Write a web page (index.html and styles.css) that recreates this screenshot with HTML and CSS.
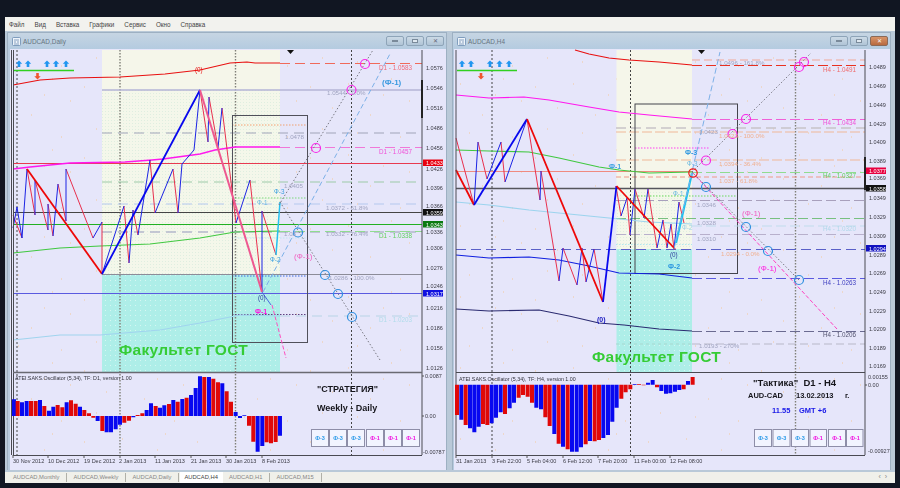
FILE: index.html
```html
<!DOCTYPE html>
<html lang="ru">
<head>
<meta charset="utf-8">
<title>AUDCAD</title>
<link rel="stylesheet" href="styles.css">
</head>
<body>
<div class="app">
  <nav class="menu">
    <span>Файл</span><span>Вид</span><span>Вставка</span><span>Графики</span><span>Сервис</span><span>Окно</span><span>Справка</span>
  </nav>
  <main class="mdi">
    <section class="win win-left">
      <header class="title">
        <svg class="doc" viewBox="0 0 9 9"><rect x=".5" y=".5" width="8" height="8" rx="1" class="doc-box"/><path d="M2 3h5M2 5h2M5 5h2M2 7h5" class="doc-line"/></svg>
        <span class="title-text">AUDCAD,Daily</span>
        <span class="wbtn"><i class="ico-min"></i></span><span class="wbtn"><i class="ico-max"></i></span><span class="wbtn"><i class="ico-x">✕</i></span>
      </header>
      <svg class="chart" viewBox="10 49 436 421">
        <defs>
          <pattern id="stip" width="3" height="3" patternUnits="userSpaceOnUse"><rect width="3" height="3" fill="#f4f7ea"/><rect width="1" height="1" fill="#dfeee0"/></pattern>
          <pattern id="stip2" width="5" height="5" patternUnits="userSpaceOnUse"><rect width="5" height="5" fill="#aeeee8"/><rect width="1" height="1" fill="#d6f6f2"/></pattern>
          <pattern id="spark" width="113" height="71" patternUnits="userSpaceOnUse"><rect width="113" height="71" fill="#e6e6fa"/><path d="M9 13h1M31 44h1M52 8h1M70 30h1M96 58h1M18 62h1M84 16h1M106 37h1M44 24h1M61 66h1" stroke="#f5c89a"/></pattern>
          <g id="up"><path d="M0-3.500 3.200-.3H1.300V3H-1.300V-.3H-3.200Z" fill="#2196f0"/></g>
          <g id="down"><path d="M0 3.500 3.200.3H1.300V-3H-1.300V.3H-3.200Z" fill="#f0562e"/></g>
        </defs>
        <rect x="10" y="49" width="436" height="421" fill="#e6e6fa"/>
        <rect x="13" y="50" width="409" height="322" fill="url(#spark)"/>
        <rect x="13" y="373" width="409" height="82" fill="url(#spark)"/>
        <rect x="102" y="50" width="178" height="39" fill="#f5f6ea"/>
        <rect x="102" y="89" width="178" height="185" fill="url(#stip)"/>
        <rect x="102" y="274" width="178" height="98" fill="url(#stip2)"/>

        <g class="vdots"><path d="M17 50V455M351.500 50V455"/></g>
        <g class="vdots2"><path d="M120 50V455M235.500 50V455"/></g>

        <!-- levels -->
        <path d="M102 90H422" stroke="#b4b4d6" stroke-width="1.500"/>
        <path d="M102 133H420" stroke="#a0a4b8" stroke-dasharray="10 6"/>
        <path d="M232 125H307" stroke="#f0a070" stroke-dasharray="1.500 1.500"/>
        <path d="M13 163.500H422" stroke="#e83a50"/>
        <path d="M102 182H420" stroke="#9ccaa8" stroke-dasharray="10 6"/>
        <path d="M102 204H422" stroke="#b4c8ee" stroke-dasharray="10 6"/>
        <path d="M232 198H307" stroke="#7ad87a" stroke-dasharray="1.500 1.500"/>
        <path d="M13 212.500H422" stroke="#444"/>
        <path d="M13 224.500H422" stroke="#22b022"/>
        <path d="M102 232H422" stroke="#b4b8cc" stroke-width="1.300" stroke-dasharray="10 6"/>
        <path d="M232 238H307" stroke="#bfe4f2" stroke-dasharray="1.500 1.500"/>
        <path d="M102 274.500H422" stroke="#8c8c98"/>
        <path d="M232 276H307" stroke="#3a6ae0" stroke-dasharray="1.500 1.500"/>
        <path d="M13 293.500H422" stroke="#5a5ae0" stroke-width="1.200"/>
        <path d="M232 314.500H307" stroke="#604080" stroke-dasharray="1.500 1.500"/>
        <path d="M280 316H422" stroke="#b8d4e6" stroke-dasharray="10 6"/>

        <!-- box -->
        <rect x="232.500" y="115.500" width="75" height="227" fill="none" stroke="#50505a"/>

        <!-- moving averages -->
        <path d="M13 85 40 80 70 78 120 77 165 74 200 70 230 63 247 62 255 63H280" fill="none" stroke="#e81010" stroke-width="1.200"/>
        <path d="M280 63.500H422" stroke="#f06a5a" stroke-dasharray="10 5"/>
        <path d="M13 169 30 167 70 163 125 162 152 160 163 159 200 154 215 150 235 147H280" fill="none" stroke="#ff18ee" stroke-width="1.300"/>
        <path d="M280 147.500H422" stroke="#f078d8" stroke-dasharray="10 5"/>
        <path d="M13 253 60 248 100 246 150 244 200 238 235 232 280 231" fill="none" stroke="#40c840" stroke-width="1.100"/>
        <path d="M280 231.500H422" stroke="#90dc90" stroke-dasharray="10 5"/>
        <path d="M13 340 60 335 100 335 160 330 200 323 240 315 280 316" fill="none" stroke="#a0d4ee" stroke-width="1.100"/>

        <!-- zigzags -->
        <g class="thin-r"><path d="M13 215 22 238M27 169 35 215M35 180 48 230M48 204 53 236M58 184 66 221M66 169 93 238M102 222V274M124 206 129 263M133 210 138 235M150 160 155 213M173 169 178 213M200 90 208 142M209 97 218 148M222 108 236 223M250 180 262 292M262 211 276 255"/></g>
        <g class="thin-b"><path d="M13 228 17 207 22 238 27 169M35 215V180M48 230V204M53 236 58 184M66 221V169M93 238 102 222M102 274 124 206M129 263 133 210M138 235 150 160M155 213 173 169M178 213 182 164 194 150 200 90M208 142 209 97M218 148 222 108M236 223 250 180M262 292V211"/></g>
        <path d="M27 169 102 274" class="thick-r"/>
        <path d="M102 274 200 90" class="thick-b"/>
        <path d="M200 90 262 292" stroke="#ee5890" stroke-width="2" fill="none"/>
        <path d="M262 292 271 305" stroke="#4a6ae0" stroke-width="1"/>
        <path d="M272 305 286 358" stroke="#ff50c0" stroke-dasharray="4 2"/>
        <path d="M276 255 280 202" stroke="#25c0f0" stroke-width="1.500" fill="none"/>

        <!-- fans -->
        <path d="M279 205 373 50" class="fan"/>
        <path d="M280 202 380 360" class="fan"/>
        <path d="M263 292 391 52" stroke="#7cb0e8" stroke-dasharray="5 3"/>

        <g class="ring-p"><circle cx="365" cy="64" r="4.500"/><circle cx="351.500" cy="90" r="4.500"/><circle cx="316" cy="148" r="4.500"/></g>
        <g class="ring-b"><circle cx="298" cy="232.500" r="4.500"/><circle cx="325" cy="275" r="4.500"/><circle cx="338" cy="294" r="4.500"/><circle cx="352" cy="317" r="4.500"/></g>

        <use href="#up" x="19" y="64"/><use href="#up" x="28" y="64"/><use href="#up" x="47" y="64"/><use href="#up" x="56" y="64"/><use href="#up" x="66" y="64"/>
        <path d="M14 70.500H74" stroke="#30d020" stroke-width="1.500"/>
        <use href="#down" x="37.500" y="76"/>
        <path d="M287 50h7l-3.500 4z" fill="#111"/>
        <path d="M422 50V455M13 372.500H422M13 455.500H422M11.500 50V455M13.500 50V455" stroke="#4a4a52" fill="none"/>
        <path d="M13 372.500H422" stroke="#6a6a72" stroke-width="1.300"/>
        <path d="M422 80V118" stroke="#222" stroke-width="2"/>
        <path d="M13 455V458M48 455V458M84 455V458M120 455V458M155 455V458M191 455V458M226 455V458M262 455V458M422 416h2M422 376h2" stroke="#555"/>

        <!-- labels -->
        <g class="t lvl">
          <text x="285" y="139">1.0478</text><text x="327" y="95">1.0544 - 0.0%</text><text x="284" y="188">1.0405</text>
          <text x="326" y="210">1.0372 - 61.8%</text><text x="326" y="236">1.0332 - 76.4%</text><text x="284" y="236">1.03</text><text x="329" y="280">1.0286 - 100.0%</text>
        </g>
        <g class="t lab">
          <text x="379" y="70" fill="#f06a7a">D1 - 1.0583</text><text x="379" y="154" fill="#f050d8">D1 - 1.0457</text>
          <text x="379" y="238" fill="#60d060">D1 - 1.0338</text><text x="379" y="322" fill="#b0dcea">D1 - 1.0203</text>
        </g>
        <text x="382" y="85" class="t big" fill="#3a9ae0">(Ф-1)</text>
        <text x="294" y="259" class="t big thin" fill="#f060c0">(Ф-1)</text>
        <text x="274" y="194" class="t lab" fill="#3aa0e0">Ф-3</text>
        <text x="257" y="205" class="t lab" fill="#6ab8e0">Ф-1</text>
        <text x="270" y="262" class="t lab" fill="#3aa0e0">Ф-2</text>
        <text x="258" y="300" class="t lab" fill="#3040a0">(0)</text>
        <text x="255" y="314" class="t lab bold" fill="#ff10e0">Ф-1</text>
        <text x="195" y="72" class="t lab" fill="#e81010">(0)</text>
        <text x="119" y="355" class="t brand">Факультет ГОСТ</text>
        <text x="15" y="380" class="t osc">ATEI.SAKS.Oscillator (5,34), TF: D1, version 1.00</text>
        <text x="317" y="392" class="t hd">"СТРАТЕГИЯ"</text>
        <text x="317" y="411" class="t hd">Weekly - Daily</text>

        <g transform="translate(0 350) scale(.3333)">
          <path class="bar-b" d="M42 198V148M66 198V157M80 198V153M120 198V150M147 198V182M160 198V170M200 198V157M240 198V170M293 198V213M320 198V247M333 198V247M347 198V238M360 198V224M400 198V202M440 198V180M453 198V160M480 198V173M493 198V166M520 198V150M547 198V147M573 198V135M587 198V114M600 198V79M627 198V81M667 198V100M707 198V186M720 198V204M733 198V196M773 198V305M787 198V288M840 198V257"/>
          <path class="bar-r" d="M53 198V153M93 198V153M107 198V153M133 198V168M173 198V165M187 198V172M213 198V151M227 198V161M253 198V180M267 198V190M280 198V203M307 198V243M373 198V218M387 198V212M413 198V195M427 198V190M467 198V168M507 198V162M533 198V155M560 198V143M613 198V81M640 198V86M654 198V97M680 198V124M693 198V155M747 198V227M760 198V275M800 198V277M813 198V280M827 198V276"/>
        </g>

        <g class="t ax">
          <text x="426" y="70">1.0576</text><text x="426" y="90">1.0546</text><text x="426" y="110">1.0516</text><text x="426" y="130">1.0486</text><text x="426" y="150">1.0456</text><text x="426" y="171">1.0426</text><text x="426" y="190">1.0396</text><text x="426" y="208">1.0366</text><text x="426" y="233.500">1.0336</text><text x="426" y="250">1.0306</text><text x="426" y="270">1.0276</text><text x="426" y="288">1.0246</text><text x="426" y="310">1.0216</text><text x="426" y="330">1.0186</text><text x="426" y="350">1.0156</text><text x="426" y="370">1.0126</text>
          <text x="425" y="378">0.0087</text><text x="425" y="418">0.00</text><text x="423" y="454">-0.00787</text>
        </g>
        <rect x="423" y="159.500" width="20" height="6.500" fill="#e80010"/><text x="426" y="165" class="t ax" fill="#fff">1.0433</text>
        <rect x="423" y="209" width="20" height="6.500" fill="#111"/><text x="426" y="214.500" class="t ax" fill="#fff">1.0359</text>
        <rect x="423" y="221" width="20" height="6.500" fill="#0a7a10"/><text x="426" y="226.500" class="t ax" fill="#fff">1.0343</text>
        <rect x="423" y="290" width="20" height="6.500" fill="#1010e0"/><text x="426" y="295.500" class="t ax" fill="#fff">1.0317</text>
        <g class="t ax"><text x="13" y="463">30 Nov 2012</text><text x="48" y="463">10 Dec 2012</text><text x="84" y="463">19 Dec 2012</text><text x="119" y="463">2 Jan 2013</text><text x="155" y="463">11 Jan 2013</text><text x="191" y="463">21 Jan 2013</text><text x="226" y="463">30 Jan 2013</text><text x="262" y="463">8 Feb 2013</text></g>

        <g class="fbtn"><rect x="311.500" y="429.500" width="17" height="17"/><rect x="329.500" y="429.500" width="17" height="17"/><rect x="347.500" y="429.500" width="17" height="17"/><rect x="366.500" y="429.500" width="17" height="17"/><rect x="384.500" y="429.500" width="17" height="17"/><rect x="402.500" y="429.500" width="17" height="17"/></g>
        <g class="t fb b3"><text x="320" y="440">Ф-3</text><text x="338" y="440">Ф-3</text><text x="356" y="440">Ф-3</text></g>
        <g class="t fb b1"><text x="375" y="440">Ф-1</text><text x="393" y="440">Ф-1</text><text x="411" y="440">Ф-1</text></g>
      </svg>
    </section>

    <section class="win win-right">
      <header class="title">
        <svg class="doc" viewBox="0 0 9 9"><rect x=".5" y=".5" width="8" height="8" rx="1" class="doc-box"/><path d="M2 3h5M2 5h2M5 5h2M2 7h5" class="doc-line"/></svg>
        <span class="title-text">AUDCAD,H4</span>
        <span class="wbtn"><i class="ico-min"></i></span><span class="wbtn"><i class="ico-max"></i></span><span class="wbtn wbtn-close"><i class="ico-x">✕</i></span>
      </header>
      <svg class="chart" viewBox="455 49 436 421">
        <rect x="455" y="49" width="436" height="421" fill="#e6e6fa"/>
        <rect x="457" y="50" width="409" height="322" fill="url(#spark)"/>
        <rect x="457" y="373" width="409" height="82" fill="url(#spark)"/>
        <rect x="617.500" y="50" width="75.500" height="140" fill="#f5f6ea"/>
        <rect x="617.500" y="190" width="75.500" height="59" fill="url(#stip)"/>
        <rect x="617.500" y="249" width="75.500" height="123" fill="url(#stip2)"/>

        <path d="M493 50V455" class="vdots"/>
        <path d="M631.500 50V455" class="vdots"/>
        <path d="M796.500 50V455" class="vdots2"/>

        <path d="M693 60H866" stroke="#f0a898" stroke-dasharray="8 4"/>
        <path d="M617 128H866" stroke="#c8c4c8" stroke-width="1.300" stroke-dasharray="10 5"/>
        <path d="M617 132H866" stroke="#f0b898" stroke-dasharray="10 3"/>
        <path d="M636 148H710" stroke="#ff40f0" stroke-dasharray="1.500 1.500"/>
        <path d="M617 160H866" stroke="#f0b898" stroke-dasharray="10 3"/>
        <path d="M457 171.500H693" stroke="#f08a80"/>
        <path d="M617 177H866" stroke="#f09888" stroke-dasharray="5 3"/>
        <path d="M457 188.500H866" stroke="#55555c" stroke-width="1.300"/>
        <path d="M636 196H738" stroke="#6ada5a" stroke-dasharray="1.500 1.500"/>
        <path d="M617 200.500H866" stroke="#a8a0bc" stroke-dasharray="10 4"/>
        <path d="M617 218.500H866" stroke="#78c080" stroke-dasharray="10 4"/>
        <path d="M617 234.500H866" stroke="#b8b0cc" stroke-dasharray="10 4"/>
        <path d="M617 244.500H693" stroke="#b0e8f0" stroke-dasharray="1.500 1.500"/>
        <path d="M457 249.500H866" stroke="#5a60c8" stroke-dasharray="10 5"/>
        <path d="M693 344H866" stroke="#b8b8c8" stroke-dasharray="8 4"/>
        <path d="M617 344H693" stroke="#a8d8d0" stroke-dasharray="3 3"/>

        <rect x="636" y="104" width="102.500" height="169.500" fill="none" stroke="#44444c"/>

        <path d="M576 50 590 54 610 58 630 60 660 62 693 65" fill="none" stroke="#e81010" stroke-width="1.200"/>
        <path d="M693 65.500H866" stroke="#e83020" stroke-dasharray="10 4"/>
        <path d="M457 95 490 98 525 97 550 100 590 107 620 112 650 115 693 119" fill="none" stroke="#ff18ee" stroke-width="1.200"/>
        <path d="M693 119.500H866" stroke="#f060d8" stroke-dasharray="10 4"/>
        <path d="M457 150 490 151 530 152 560 158 600 167 620 170 650 173 693 172" fill="none" stroke="#40c840" stroke-width="1.100"/>
        <path d="M693 172.500H866" stroke="#90dc90" stroke-dasharray="10 4"/>
        <path d="M457 202 490 205 530 210 570 214 600 217 650 222 693 224" fill="none" stroke="#9cd4ee" stroke-width="1.100"/>
        <path d="M693 226H866" stroke="#c0dcec" stroke-dasharray="10 4"/>
        <path d="M457 255 490 258 530 257 560 260 590 266 620 273 660 274 693 278" fill="none" stroke="#1020e0" stroke-width="1.100"/>
        <path d="M693 278.500H866" stroke="#5a5ae0" stroke-dasharray="10 4"/>
        <path d="M457 309 490 311 540 310 570 316 600 323 625 325 660 329 693 331" fill="none" stroke="#2a2a70" stroke-width="1.100"/>
        <path d="M693 331.500H866" stroke="#6a6a90" stroke-dasharray="10 4"/>

        <g class="thin-r"><path d="M457 138 475 205M479 142 488 179M502 142 506 182M528 119 541 200M542 171 560 281M564 248 578 285M583 248 587 282M595 249 604 302M617 186 622 216M628 198 631 235M636 189 645 218M649 189 658 248M664 220 668 248M672 224 675 249M680 202 685 223"/></g>
        <g class="thin-b"><path d="M475 205 479 142M488 179 502 142M506 182 528 119M541 200 542 171M560 281 564 248M578 285 583 248M587 282 595 249M622 216 628 198M631 235 636 189M645 218 649 189M658 248 664 220M668 248 672 224M675 249 680 202"/></g>
        <path d="M457 170 475 205" class="thick-r"/>
        <path d="M475 205 528 119" class="thick-b"/>
        <path d="M528 119 604 302" class="thick-r"/>
        <path d="M604 302 617.500 186" class="thick-b"/>
        <path d="M617.500 186 676 249" class="thick-r"/>
        <path d="M677 243 693 173" stroke="#20c0f0" stroke-width="2.200"/>

        <path d="M693 172 838 329" stroke="#ff40c0" stroke-dasharray="4 2"/>
        <path d="M693 172 800 280" class="fan"/>
        <path d="M693 172 812 53" class="fan"/>
        <path d="M675 249 721 52" stroke="#7cb0e8" stroke-dasharray="6 3"/>

        <g class="ring-p"><circle cx="805" cy="62" r="4.500"/><circle cx="800" cy="67" r="4.500"/><circle cx="747" cy="119" r="4.500"/><circle cx="733.500" cy="134" r="4.500"/><circle cx="707" cy="160.500" r="4.500"/></g>
        <circle cx="694" cy="173" r="4.200" fill="none" stroke="#f01818" stroke-width="1.200"/>
        <g class="ring-b"><circle cx="707" cy="187" r="4.500"/><circle cx="747" cy="227" r="4.500"/><circle cx="769" cy="251" r="4.500"/><circle cx="800" cy="280" r="4.500"/></g>

        <use href="#up" x="463" y="64"/><use href="#up" x="472" y="64"/><use href="#up" x="491" y="64"/><use href="#up" x="500.500" y="64"/><use href="#up" x="510" y="64"/>
        <path d="M458 70.500H518" stroke="#30d020" stroke-width="1.500"/>
        <use href="#down" x="482" y="76"/>
        <path d="M699 50h7l-3.500 4z" fill="#111"/>
        <path d="M866 50V455M457 372.500H866M457 455.500H866M457 50V455" stroke="#4a4a52" fill="none"/>
        <path d="M866 157V190" stroke="#222" stroke-width="2"/>
        <path d="M457 455V458M493 455V458M528 455V458M564 455V458M599 455V458M635 455V458M671 455V458M866 385h2" stroke="#555"/>

        <g class="t lvl">
          <text x="720" y="65" fill="#f0a090">1.0496 - 161.8%</text><text x="700" y="134">1.0423</text>
          <text x="698" y="207">1.0346</text><text x="698" y="225">1.0328</text><text x="698" y="241">1.0310</text><text x="700" y="348">1.0193 - 270%</text>
        </g>
        <g class="t lvs">
          <text x="720" y="138">1.0423 - 100.0%</text><text x="720" y="166">1.0394 - 36.4%</text><text x="720" y="183">1.037 - 61.8%</text><text x="722" y="256">1.0294 - 0.0%</text>
        </g>
        <g class="t lab">
          <text x="824" y="72" fill="#f06a6a">H4 - 1.0491</text><text x="824" y="125" fill="#f050d8">H4 - 1.0434</text>
          <text x="824" y="178" fill="#60d060">H4 - 1.0327</text><text x="824" y="231" fill="#b0d8ea">H4 - 1.0320</text>
          <text x="824" y="285" fill="#4040c0">H4 - 1.0263</text><text x="824" y="337" fill="#555570">H4 - 1.0206</text>
        </g>
        <text x="610" y="169" class="t lab bold" fill="#3aa0e0">Ф-1</text>
        <text x="686" y="155" class="t lab bold" fill="#2a96e0">Ф-3</text>
        <text x="688" y="166" class="t lab" fill="#6ab8e0">Ф-3</text>
        <text x="674" y="196" class="t lab" fill="#6ab8e0">Ф-1</text>
        <text x="683" y="230" class="t lab" fill="#a0d0e8">Ф-2</text>
        <text x="669" y="269" class="t lab bold" fill="#2a96e0">Ф-2</text>
        <text x="671" y="257" class="t lab" fill="#3040a0">(0)</text>
        <text x="598" y="322" class="t lab bold" fill="#1818c0">(0)</text>
        <text x="743" y="216" class="t big thin" fill="#f060c0">(Ф-1)</text>
        <text x="759" y="271" class="t big thin" fill="#ff20e0">(Ф-1)</text>
        <text x="593" y="362" class="t brand">Факультет ГОСТ</text>
        <text x="460" y="381" class="t osc">ATEI.SAKS.Oscillator (5,34), TF: H4, version 1.00</text>

        <g transform="translate(450 370) scale(.3333)">
          <path class="bar-b" d="M37 44V149M63 44V175M76 44V187M89 44V170M128 44V160M141 44V143M155 44V127M182 44V115M195 44V98M262 44V113M276 44V118M316 44V192M342 44V230M369 44V245M383 44V245M396 44V232M423 44V213M463 44V204M477 44V195M490 44V155M503 44V113M557 44V42M597 44V38M611 44V30M637 44V63M651 44V71M664 44V70M678 44V65M691 44V60M717 44V33"/>
          <path class="bar-r" d="M24 44V135M50 44V165M102 44V162M115 44V165M168 44V132M209 44V83M222 44V75M236 44V80M249 44V98M289 44V142M302 44V168M329 44V221M356 44V238M410 44V223M437 44V214M450 44V210M517 44V86M530 44V67M544 44V58M570 44V42M584 44V46M624 44V52M704 44V58M731 44V21"/>
        </g>

        <g class="t ax">
          <text x="870" y="69">1.0489</text><text x="870" y="88">1.0469</text><text x="870" y="107">1.0449</text><text x="870" y="126">1.0429</text><text x="870" y="144">1.0409</text><text x="870" y="163">1.0389</text><text x="870" y="180">1.0369</text><text x="870" y="200">1.0349</text><text x="870" y="219">1.0329</text><text x="870" y="238">1.0309</text><text x="870" y="257">1.0289</text><text x="870" y="275">1.0269</text><text x="870" y="294">1.0249</text><text x="870" y="313">1.0229</text><text x="870" y="331">1.0209</text><text x="870" y="350">1.0189</text><text x="870" y="368">1.0169</text>
          <text x="869" y="379">0.00155</text><text x="869" y="387">0.00</text><text x="869" y="453">-0.00927</text>
        </g>
        <rect x="867" y="167.500" width="20" height="6.500" fill="#e80040"/><text x="870" y="173" class="t ax" fill="#fff">1.0377</text>
        <rect x="867" y="185" width="20" height="6.500" fill="#111"/><text x="870" y="190.500" class="t ax" fill="#fff">1.0358</text>
        <rect x="867" y="245" width="20" height="6.500" fill="#1010c0"/><text x="870" y="250.500" class="t ax" fill="#fff">1.0294</text>
        <g class="t ax"><text x="457" y="463">31 Jan 2013</text><text x="493" y="463">3 Feb 22:00</text><text x="528" y="463">5 Feb 04:00</text><text x="564" y="463">6 Feb 12:00</text><text x="599" y="463">7 Feb 20:00</text><text x="635" y="463">11 Feb 00:00</text><text x="671" y="463">12 Feb 08:00</text></g>

        <text x="754" y="386" class="t hd hd-b">"Тактика"  D1 - H4</text>
        <text x="749" y="398" class="t hd-s">AUD-CAD</text><text x="797" y="398" class="t hd-s">13.02.2013</text><text x="846" y="398" class="t hd-s">г.</text>
        <text x="773" y="413" class="t hd-s hd-blue">11.55</text><text x="800" y="413" class="t hd-s hd-blue">GMT +6</text>

        <g class="fbtn"><rect x="755.500" y="429.500" width="17" height="17"/><rect x="774" y="429.500" width="17" height="17"/><rect x="792.500" y="429.500" width="17" height="17"/><rect x="811" y="429.500" width="16.500" height="17"/><rect x="829.500" y="429.500" width="17" height="17"/><rect x="847.500" y="429.500" width="16.500" height="17"/></g>
        <g class="t fb b3"><text x="764" y="440">Ф-3</text><text x="782.500" y="440">Ф-3</text><text x="801" y="440">Ф-3</text></g>
        <g class="t fb b1"><text x="819" y="440">Ф-1</text><text x="838" y="440">Ф-1</text><text x="856" y="440">Ф-1</text></g>
      </svg>
    </section>
  </main>
  <footer class="tabs">
    <span class="tab">AUDCAD,Monthly</span><span class="tab">AUDCAD,Weekly</span><span class="tab">AUDCAD,Daily</span><span class="tab tab-on">AUDCAD,H4</span><span class="tab">AUDCAD,H1</span><span class="tab">AUDCAD,M15</span>
    <span class="nav">‹&nbsp;&nbsp;›</span>
  </footer>
</div>
</body>
</html>
```
FILE: styles.css
```css
* { box-sizing: border-box; }
html, body { margin: 0; height: 100%; }
body { background: #111622; padding: 17px 5px 5px 5px; width: 900px; height: 488px; overflow: hidden; font-family: "Liberation Sans", Arial, sans-serif; }
.app { width: 890px; height: 466px; display: flex; flex-direction: column; background: #f0f0ea; }
.menu { height: 14px; flex: none; display: flex; align-items: center; padding-left: 4px; gap: 10px; font-size: 6.300px; color: #444; background: #f2f2ee; }
.mdi { flex: 1; display: flex; gap: 5px; padding: 1px 4px 2px 2px; background: #b9c9d8; min-height: 0; }
.win { width: 440px; flex: none; display: flex; flex-direction: column; background: #b7cbdf; border: 1px solid #9db0c2; border-bottom: 0; }
.win-right { width: 439px; }
.title { height: 16px; flex: none; display: flex; align-items: center; padding: 0 2px 0 14px; gap: 2px; background: linear-gradient(#c6d5e3, #b4cbe0); position: relative; }
.doc { width: 9px; height: 9px; position: absolute; left: 4px; top: 4px; }
.doc-box { fill: #eef4fa; stroke: #6a8cb0; stroke-width: .8; }
.doc-line { stroke: #6a8cb0; stroke-width: .8; fill: none; }
.title-text { font-size: 6.400px; color: #66747f; flex: 1; margin-left: 1px; }
.wbtn { width: 18px; height: 10px; border: 1px solid #8ea4b8; border-radius: 2px; background: linear-gradient(#ccdae6, #b0c4d6); display: flex; align-items: center; justify-content: center; }
.wbtn-close { background: linear-gradient(#d89468, #b86a40); border-color: #8a6a58; }
.wbtn i { display: block; font-style: normal; }
.ico-min { width: 6px; height: 2px; background: #f4f8fb; border: .5px solid #7a8a9a; }
.ico-max { width: 6px; height: 4px; background: #dfe8f0; border: 1px solid #7a8a9a; }
.ico-x { font-size: 6px; line-height: 1; color: #667; }
.wbtn-close .ico-x { color: #f6f6f6; }
.chart { display: block; width: 436px; height: 421px; flex: none; margin-left: 2px; filter: blur(.35px); }
.win-right .chart { margin-left: 1px; }

.vdots path, .vdots { stroke: #444; stroke-dasharray: 2 2; fill: none; }
.vdots2 path, .vdots2 { stroke: #808078; stroke-width: 1.4; stroke-dasharray: 1.500 1.500; fill: none; }
.thin-r path { stroke: #e8304e; stroke-width: 1; fill: none; }
.thin-b path { stroke: #1c24e4; stroke-width: 1; fill: none; }
.thick-r { stroke: #ee0808; stroke-width: 1.800; fill: none; }
.thick-b { stroke: #0808ee; stroke-width: 1.800; fill: none; }
.fan { stroke: #7a7a84; stroke-dasharray: 1.500 2; fill: none; }
.ring-p circle { fill: none; stroke: #f828e8; stroke-width: 1.200; }
.ring-b circle { fill: none; stroke: #2f8fe0; stroke-width: 1.200; }
.bar-b { stroke: #0808f0; stroke-width: 12; fill: none; }
.bar-r { stroke: #e00808; stroke-width: 12; fill: none; }

.t { font-family: "Liberation Sans", Arial, sans-serif; }
.ax, .ax text { font-size: 5.500px; fill: #3a3a44; }
.ax[fill] { fill: #fff; }
.lvl text { font-size: 6.200px; fill: #a0a4c0; }
.lvs text { font-size: 6.200px; fill: #f0b090; }
.lab, .lab text { font-size: 6.300px; }
.bold { font-weight: 700; font-size: 7px; }
.big { font-size: 8px; font-weight: 700; }
.thin { font-weight: 400; }
.brand { font-size: 15.500px; font-weight: 700; fill: #35cc35; letter-spacing: .3px; }
.osc { font-size: 5.300px; fill: #33333c; }
.hd { font-size: 9px; font-weight: 700; fill: #16161c; }
.hd-b { font-size: 9.500px; white-space: pre; }
.hd-s { font-size: 7.500px; font-weight: 700; fill: #16161c; }
.hd-blue { fill: #1818e8; }
.fbtn rect { fill: #f2f4ff; stroke: #8e8ea8; }
.fb text { font-size: 5.500px; font-weight: 700; text-anchor: middle; }
.b3 text { fill: #2a9ae8; }
.b1 text { fill: #f010e0; }

.tabs { height: 11px; flex: none; display: flex; align-items: center; padding-left: 2px; background: #f0f0ea; font-size: 5.800px; color: #868686; position: relative; }
.tab { padding: 0 7px 0 6px; border-right: 1px solid #b0b0a8; height: 9px; line-height: 9px; }
.tab-on { background: #fff; color: #444; border-right: 0; height: 11px; line-height: 11px; padding: 0 5px 0 4px; margin-left: 1px; }
.nav { position: absolute; right: 8px; top: 1px; color: #888; font-size: 7px; }
```
